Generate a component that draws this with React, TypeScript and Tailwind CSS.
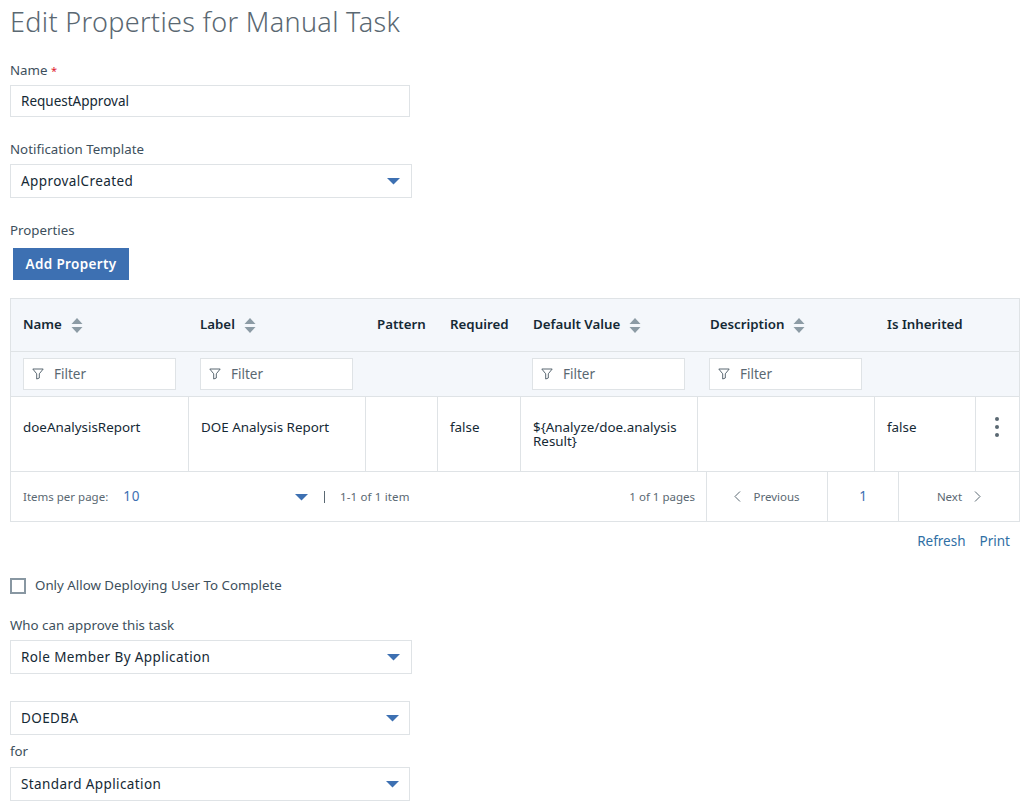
import React from "react";

const font = "font-['Noto_Sans','Open_Sans',sans-serif]";

function Caret() {
  return (
    <svg width="14" height="8" viewBox="0 0 14 8" className="shrink-0">
      <path d="M0 1h13L6.5 7.5z" fill="#3d70b2" />
    </svg>
  );
}

function Sort() {
  return (
    <svg width="12" height="15" viewBox="0 0 12 15" className="shrink-0">
      <path d="M6 0l5.5 6H.5z" fill="#8c9ba5" />
      <path d="M6 15L.5 9h11z" fill="#8c9ba5" />
    </svg>
  );
}

function FilterIcon() {
  return (
    <svg width="12" height="12" viewBox="0 0 12 12" fill="none" className="shrink-0">
      <path d="M.8 1h10.4L7.3 5.8v4.2L4.7 11V5.8z" stroke="#5a6872" strokeWidth="1" />
    </svg>
  );
}

function Select({ value, w, rightPad }: { value: string; w: string; rightPad: string }) {
  return (
    <div className={`${w} ${rightPad} h-[34px] flex items-center justify-between border border-[#dfe3e6] pl-[10px] text-[13.5px] tracking-[0.4px] text-[#152935]`}>
      <span>{value}</span>
      <Caret />
    </div>
  );
}

function Filter() {
  return (
    <div className="w-[153px] h-[32px] flex items-center gap-[10px] border border-[#dfe3e6] bg-white pl-[8px] text-[13.5px] text-[#5a6872]">
      <FilterIcon />
      <span>Filter</span>
    </div>
  );
}

function Head({ label, sort }: { label: string; sort?: boolean }) {
  return (
    <div className="h-[52px] flex items-center gap-[9px] pl-[12px] text-[13.3px] font-semibold text-[#152935] whitespace-nowrap">
      <span>{label}</span>
      {sort && <Sort />}
    </div>
  );
}

function FilterCell({ show }: { show?: boolean }) {
  return <div className="h-[44px] pt-[6px] pl-[12px]">{show && <Filter />}</div>;
}

function Cell({ children, last }: { children?: React.ReactNode; last?: boolean }) {
  return (
    <div className={`h-[74px] pt-[23px] pl-[12px] pr-[8px] text-[13.4px] leading-[14px] text-[#152935] ${last ? "" : "border-r border-[#dfe3e6]"}`}>
      {children}
    </div>
  );
}

export default function App() {
  return (
    <div className={`${font} w-[1030px] h-[806px] overflow-hidden bg-white pl-[10px] text-[#3d4f5c]`}>
      <h1 className="pt-[5px] h-[46px] text-[27px] leading-[34px] font-light text-[#5a6872] tracking-[0.33px]">
        Edit Properties for Manual Task
      </h1>

      <div className="mt-[16px] h-[17px] text-[13.3px] leading-[17px]">
        Name <span className="text-[11px] text-[#e0182d]">*</span>
      </div>
      <div className="mt-[6px] w-[400px] h-[32px] flex items-center border border-[#dfe3e6] pl-[10px] pt-[1px] text-[13.5px] text-[#152935]">
        RequestApproval
      </div>

      <div className="mt-[24px] h-[17px] text-[13.3px] leading-[17px]">Notification Template</div>
      <div className="mt-[6px]">
        <Select value="ApprovalCreated" w="w-[402px]" rightPad="pr-[10px]" />
      </div>

      <div className="mt-[24px] h-[17px] text-[13.3px] leading-[17px]">Properties</div>
      <div className="mt-[9px] ml-[3px] w-[116px] h-[32px] flex items-center justify-center bg-[#3d70b2] text-[13.5px] font-semibold tracking-[0.35px] text-white">
        Add Property
      </div>

      <div className="mt-[18px] w-[1010px] border border-[#dfe3e6]">
        <div className="grid grid-cols-[177px_177px_73px_83px_177px_177px_101px_1fr] bg-[#f4f7fb]">
          <Head label="Name" sort />
          <Head label="Label" sort />
          <Head label="Pattern" />
          <Head label="Required" />
          <Head label="Default Value" sort />
          <Head label="Description" sort />
          <Head label="Is Inherited" />
          <div />
        </div>
        <div className="grid grid-cols-[177px_177px_72px_83px_177px_177px_101px_1fr] bg-[#f4f7fb] border-t border-[#dfe3e6]">
          <FilterCell show />
          <FilterCell show />
          <FilterCell />
          <FilterCell />
          <FilterCell show />
          <FilterCell show />
          <FilterCell />
          <FilterCell />
        </div>
        <div className="grid grid-cols-[178px_177px_72px_83px_177px_177px_101px_1fr] border-t border-[#dfe3e6]">
          <Cell>doeAnalysisReport</Cell>
          <Cell>DOE Analysis Report</Cell>
          <Cell />
          <Cell>false</Cell>
          <Cell>
            {"${Analyze/doe.analysis"}
            <br />
            {"Result}"}
          </Cell>
          <Cell />
          <Cell>false</Cell>
          <div className="h-[74px] flex flex-col items-center pt-[20px] pr-[2px] gap-[4px]">
            <span className="w-[4px] h-[4px] rounded-full bg-[#5a6872]" />
            <span className="w-[4px] h-[4px] rounded-full bg-[#5a6872]" />
            <span className="w-[4px] h-[4px] rounded-full bg-[#5a6872]" />
          </div>
        </div>
        <div className="h-[50px] flex items-stretch border-t border-[#dfe3e6] text-[11.5px] text-[#5a6872]">
          <div className="w-[304px] flex items-center justify-between pl-[12px] pr-[6px]">
            <div className="flex items-center">
              <span>Items per page:</span>
              <span className="ml-[15px] text-[13.5px] text-[#3d70b2] tracking-[0.8px]">10</span>
            </div>
            <Caret />
          </div>
          <div className="flex items-center">
            <span className="ml-[9px] w-px h-[12px] bg-[#5a6872]" />
            <span className="ml-[15px] tracking-[0.15px]">1-1 of 1 item</span>
          </div>
          <div className="flex-1 flex items-center justify-end pr-[11px]">1 of 1 pages</div>
          <div className="w-[121px] flex items-center justify-center gap-[12px] border-l border-[#dfe3e6]">
            <svg width="7" height="11" viewBox="0 0 7 11" fill="none"><path d="M6 .5L1 5.5l5 5" stroke="#5a6872" /></svg>
            <span>Previous</span>
          </div>
          <div className="w-[71px] flex items-center justify-center border-l border-[#dfe3e6] text-[13.5px] text-[#3d70b2]">1</div>
          <div className="w-[121px] flex items-center justify-center gap-[12px] border-l border-[#dfe3e6]">
            <span>Next</span>
            <svg width="7" height="11" viewBox="0 0 7 11" fill="none"><path d="M1 .5l5 5-5 5" stroke="#5a6872" /></svg>
          </div>
        </div>
      </div>

      <div className="mt-[10px] w-[1000px] h-[18px] flex justify-end gap-[14px] text-[13.5px] leading-[18px] text-[#2f6fa5]">
        <span>Refresh</span>
        <span>Print</span>
      </div>

      <div className="mt-[27px] flex items-center gap-[9px] text-[13.3px] leading-[17px]">
        <span className="w-[16px] h-[16px] border-2 border-[#8897a2]" />
        <span>Only Allow Deploying User To Complete</span>
      </div>

      <div className="mt-[23px] h-[17px] text-[13.3px] leading-[17px]">Who can approve this task</div>
      <div className="mt-[6px]">
        <Select value="Role Member By Application" w="w-[402px]" rightPad="pr-[10px]" />
      </div>
      <div className="mt-[27px]">
        <Select value="DOEDBA" w="w-[400px]" rightPad="pr-[9px]" />
      </div>
      <div className="mt-[8px] h-[17px] text-[13.3px] leading-[17px]">for</div>
      <div className="mt-[7px]">
        <Select value="Standard Application" w="w-[400px]" rightPad="pr-[9px]" />
      </div>
    </div>
  );
}
